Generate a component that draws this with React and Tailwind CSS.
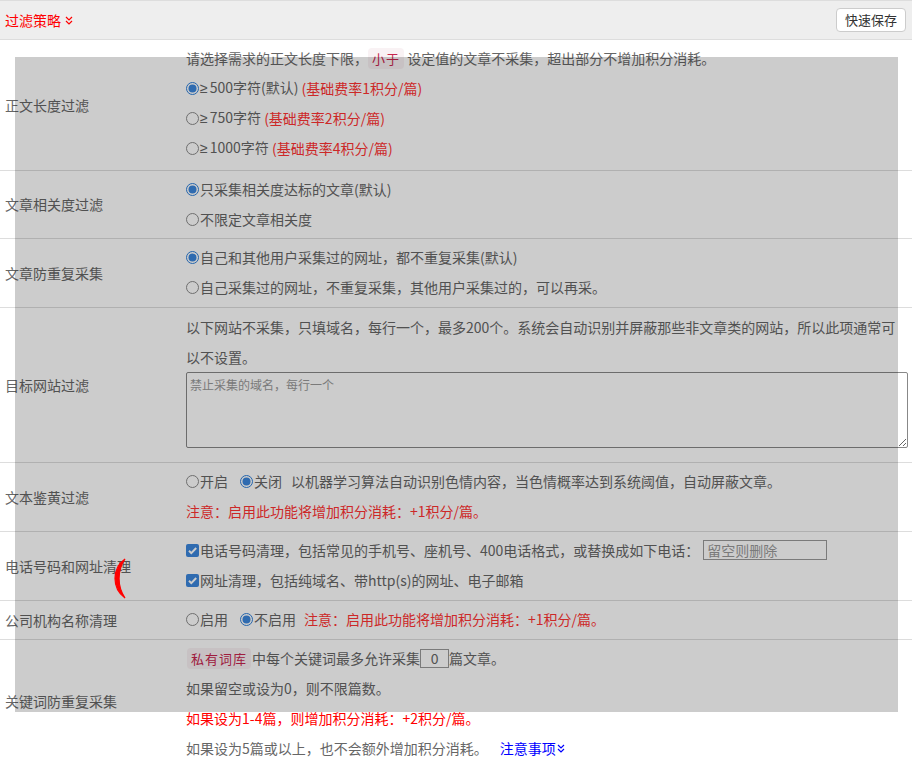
import React from 'react'

// 单选框
const Radio = ({ checked }) => (
  <svg width="13" height="13" viewBox="0 0 13 13" className="shrink-0">
    {checked ? (
      <>
        <circle cx="6.5" cy="6.5" r="6" fill="#fff" stroke="#2f7fd8" />
        <circle cx="6.5" cy="6.5" r="4" fill="#3b86dc" />
      </>
    ) : (
      <circle cx="6.5" cy="6.5" r="6" fill="#fff" stroke="#8a8a8a" />
    )}
  </svg>
)

const Check = () => (
  <svg width="13" height="13" viewBox="0 0 13 13" className="shrink-0">
    <rect x="0" y="0" width="13" height="13" rx="2" fill="#3b86dc" />
    <path d="M3 6.8l2.3 2.3L10.2 4" fill="none" stroke="#fff" strokeWidth="2" />
  </svg>
)

const DoubleDown = () => (
  <svg width="8" height="9" viewBox="0 0 8 9" fill="none" stroke="currentColor" strokeWidth="1.2" className="shrink-0">
    <path d="M1 1l3 3 3-3M1 5l3 3 3-3" />
  </svg>
)

const Opt = ({ checked, children, className = '' }) => (
  <label className={`inline-flex items-center gap-px ${className}`}>
    <Radio checked={checked} />
    <span>{children}</span>
  </label>
)

const Ge = () => <span className="font-['Liberation_Sans',sans-serif] mr-[2px]">≥</span>

const Line = ({ children, className = '' }) => (
  <div className={`h-[30px] flex items-center whitespace-nowrap ${className}`}>{children}</div>
)

const Code = ({ children }) => (
  <span className="inline-block px-[4px] py-[2px] leading-[17px] text-[13px] tracking-[1px] rounded-[4px] bg-[#f9f2f4] text-[#c7254e]">
    {children}
  </span>
)

const Row = ({ label, children, className = 'pt-[3px] pb-[5px]' }) => (
  <div className="flex border-b border-[#ddd]">
    <div className="w-[186px] shrink-0 pl-[5px] flex items-center">{label}</div>
    <div className={`flex-1 ${className}`}>{children}</div>
  </div>
)

export default function App() {
  return (
    <div className="relative w-[912px] min-h-[768px] bg-white text-[14px] text-[#666] font-['Noto_Sans_CJK_SC','Liberation_Sans',sans-serif]">
      {/* 标题栏 */}
      <div className="h-[40px] flex items-center justify-between bg-[#eee] border-y border-[#ddd] pl-[5px] pr-[6px]">
        <div className="flex items-center gap-[4px] text-[#f00]">
          过滤策略 <DoubleDown />
        </div>
        <button className="h-[24px] px-[8px] bg-white border border-[#ccc] rounded-[4px] text-[13px] text-[#333]">
          快速保存
        </button>
      </div>

      <Row label="正文长度过滤" className="pt-[3px] pb-[7px]">
        <Line>
          请选择需求的正文长度下限，<Code>小于</Code>&nbsp;设定值的文章不采集，超出部分不增加积分消耗。
        </Line>
        <Line>
          <Opt checked><Ge />500字符(默认)</Opt>&nbsp;<span className="text-[#f33]">(基础费率1积分/篇)</span>
        </Line>
        <Line>
          <Opt><Ge />750字符</Opt>&nbsp;<span className="text-[#f33]">(基础费率2积分/篇)</span>
        </Line>
        <Line>
          <Opt><Ge />1000字符</Opt>&nbsp;<span className="text-[#f33]">(基础费率4积分/篇)</span>
        </Line>
      </Row>

      <Row label="文章相关度过滤" className="pt-[3px] pb-[4px]">
        <Line><Opt checked>只采集相关度达标的文章(默认)</Opt></Line>
        <Line><Opt>不限定文章相关度</Opt></Line>
      </Row>

      <Row label="文章防重复采集">
        <Line><Opt checked>自己和其他用户采集过的网址，都不重复采集(默认)</Opt></Line>
        <Line><Opt>自己采集过的网址，不重复采集，其他用户采集过的，可以再采。</Opt></Line>
      </Row>

      <Row label="目标网站过滤" className="pt-[4px] pb-[14px] pr-[4px]">
        <Line>以下网站不采集，只填域名，每行一个，最多200个。系统会自动识别并屏蔽那些非文章类的网站，所以此项通常可</Line>
        <Line>以不设置。</Line>
        <textarea
          placeholder="禁止采集的域名，每行一个"
          className="block w-full h-[76px] px-[3px] py-[3px] text-[12px] leading-[18px] bg-white border border-[#888] rounded-[2px] placeholder:text-[#999] outline-none"
        />
      </Row>

      <Row label="文本鉴黄过滤">
        <Line>
          <Opt>开启</Opt>
          <Opt checked className="ml-[12px]">关闭</Opt>
          <span className="ml-[9px]">以机器学习算法自动识别色情内容，当色情概率达到系统阈值，自动屏蔽文章。</span>
        </Line>
        <Line className="text-[#f33]">注意：启用此功能将增加积分消耗：+1积分/篇。</Line>
      </Row>

      <Row label="电话号码和网址清理">
        <Line>
          <label className="inline-flex items-center gap-px">
            <Check />
            <span>电话号码清理，包括常见的手机号、座机号、400电话格式，或替换成如下电话：</span>
          </label>
          <input
            placeholder="留空则删除"
            className="ml-[4px] w-[124px] h-[20px] px-[3px] text-[14px] border border-[#999] bg-white placeholder:text-[#999] outline-none"
          />
        </Line>
        <Line>
          <label className="inline-flex items-center gap-px">
            <Check />
            <span>网址清理，包括纯域名、带http(s)的网址、电子邮箱</span>
          </label>
        </Line>
      </Row>

      <Row label="公司机构名称清理">
        <Line>
          <Opt>启用</Opt>
          <Opt checked className="ml-[12px]">不启用</Opt>
          <span className="ml-[8px] text-[#f33]">注意：启用此功能将增加积分消耗：+1积分/篇。</span>
        </Line>
      </Row>

      <div className="flex">
        <div className="w-[186px] shrink-0 pl-[5px] flex items-center">关键词防重复采集</div>
        <div className="flex-1 pt-[3px]">
          <Line>
            <span className="ml-px"><Code>私有词库</Code></span>
            <span className="ml-[1px]">中每个关键词最多允许采集</span>
            <input
              defaultValue="0"
              className="w-[29px] h-[19px] text-center text-[14px] border border-[#999] bg-white outline-none"
            />
            <span>篇文章。</span>
          </Line>
          <Line>如果留空或设为0，则不限篇数。</Line>
          <Line className="text-[#f00]">如果设为1-4篇，则增加积分消耗：+2积分/篇。</Line>
          <Line>
            如果设为5篇或以上，也不会额外增加积分消耗。
            <a className="ml-[12px] inline-flex items-center gap-px text-[#00f]">
              注意事项 <DoubleDown />
            </a>
          </Line>
        </div>
      </div>

      {/* 加载遮罩 */}
      <div className="absolute left-[15px] top-[57px] w-[883px] h-[655px] bg-black/20">
        <svg width="20" height="44" viewBox="0 0 20 44" className="absolute left-[98px] top-[500px]">
          <path d="M12 2 A24 24 0 0 0 12 41 A35 35 0 0 1 12 2 Z" fill="#f00" stroke="#f00" strokeWidth="1.2" />
        </svg>
      </div>
    </div>
  )
}
